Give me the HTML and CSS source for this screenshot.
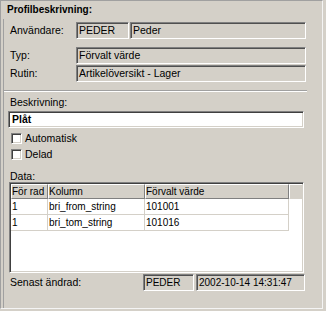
FILE: index.html
```html
<!DOCTYPE html>
<html>
<head>
<meta charset="utf-8">
<link rel="stylesheet" href="styles.css">
</head>
<body>
<div class="panel">
  <div class="title">Profilbeskrivning:</div>
  <div class="group">
    <div class="sec1">
      <div class="row r-anv"><span class="lbl">Användare:</span><span class="field f-user">PEDER</span><span class="field f-name">Peder</span></div>
      <div class="row r-typ"><span class="lbl">Typ:</span><span class="field f-wide">Förvalt värde</span></div>
      <div class="row r-rut"><span class="lbl">Rutin:</span><span class="field f-wide">Artikelöversikt - Lager</span></div>
    </div>
    <div class="sec2">
      <div class="lbl2 lbl-besk">Beskrivning:</div>
      <div class="edit">Plåt</div>
      <div class="chk chk1"><span class="box"></span><span>Automatisk</span></div>
      <div class="chk chk2"><span class="box"></span><span>Delad</span></div>
      <div class="lbl2 lbl-data">Data:</div>
      <div class="grid">
        <div class="ghead">
          <span class="hc c1">För rad</span><span class="hc c2">Kolumn</span><span class="hc c3">Förvalt värde</span><span class="hc c4"></span>
        </div>
        <div class="grow">
          <span class="gc c1">1</span><span class="gc c2">bri_from_string</span><span class="gc c3">101001</span>
        </div>
        <div class="grow">
          <span class="gc c1">1</span><span class="gc c2">bri_tom_string</span><span class="gc c3">101016</span>
        </div>
      </div>
      <div class="footer"><span class="lbl lbl-sen">Senast ändrad:</span><span class="field f-su">PEDER</span><span class="field f-date">2002-10-14 14:31:47</span></div>
    </div>
  </div>
</div>
</body>
</html>
```

FILE: styles.css
```css
html, body {
  margin: 0;
  padding: 0;
  background: #d4d0c8;
}
body {
  font-family: "Liberation Sans", Arial, sans-serif;
  font-size: 10px;
  color: #000;
}
.panel {
  width: 323px;
  height: 309px;
  box-sizing: border-box;
  border: 1px solid;
  border-color: #a0a0a0 #f4f4f4 #f4f4f4 #a0a0a0;
  display: flex;
  flex-direction: column;
}
.title {
  font-weight: bold;
  font-size: 10px;
  line-height: 13px;
  margin: 2px 0 0 6px;
  height: 13px;
}
.group {
  margin: 3px 0 0 2px;
  width: 304px;
  box-sizing: border-box;
  border-left: 1px solid #a0a0a0;
  flex: 1;
  display: flex;
  flex-direction: column;
}
.sec1 {
  padding: 3px 0 8px 6px;
  border-bottom: 1px solid #a0a0a0;
  box-shadow: 0 1px 0 #fff;
}
.row {
  display: flex;
  height: 17px;
  align-items: stretch;
}
.r-typ { margin-top: 8px; }
.r-rut { margin-top: 1px; }
.lbl {
  width: 66px;
  line-height: 17px;
  flex: none;
  font-size: 10.5px;
}
.field {
  box-sizing: border-box;
  height: 17px;
  border: 1px solid;
  border-color: #808080 #fff #fff #808080;
  box-shadow: inset 1px 1px 0 #505050;
  padding: 0 0 0 2px;
  line-height: 15px;
  white-space: nowrap;
  overflow: hidden;
  font-size: 10.5px;
}
.f-user { width: 53px; }
.f-name { width: 176px; margin-left: 1px; }
.f-wide { width: 230px; }
.sec2 {
  padding-left: 4px;
  display: flex;
  flex-direction: column;
}
.lbl2 {
  margin-left: 2px;
  line-height: 13px;
  height: 13px;
  font-size: 10.5px;
}
.lbl-besk { margin-top: 5px; }
.edit {
  margin-top: 2px;
  width: 296px;
  height: 17px;
  box-sizing: border-box;
  background: #fff;
  border: 1px solid;
  border-color: #808080 #fff #fff #808080;
  box-shadow: inset 1px 1px 0 #404040, inset -1px -1px 0 #d4d0c8;
  font-weight: bold;
  font-size: 10.5px;
  line-height: 15px;
  padding-left: 3px;
}
.chk {
  display: flex;
  align-items: center;
  height: 13px;
  line-height: 13px;
  font-size: 10.5px;
}
.chk1 { margin-top: 4px; }
.chk2 { margin-top: 3px; }
.box {
  width: 11px;
  height: 11px;
  box-sizing: border-box;
  margin: 0 3px 0 3px;
  background: #fff;
  border: 1px solid;
  border-color: #808080 #fff #fff #808080;
  box-shadow: inset 1px 1px 0 #404040, inset -1px -1px 0 #d4d0c8;
}
.lbl-data {
  margin-top: 9px;
  height: 12px;
  line-height: 12px;
}
.grid {
  margin-left: 1px;
  width: 295px;
  height: 91px;
  box-sizing: border-box;
  background: #fff;
  border: 1px solid;
  border-color: #808080 #fff #fff #808080;
  box-shadow: inset 1px 1px 0 #404040, inset -1px -1px 0 #d4d0c8;
  padding: 1px;
}
.ghead {
  display: flex;
  height: 15px;
  background: #d4d0c8;
}
.hc {
  box-sizing: border-box;
  height: 15px;
  border: 1px solid;
  border-color: #fff #808080 #808080 #fff;
  line-height: 13px;
  padding-left: 0;
  white-space: nowrap;
  overflow: hidden;
}
.c1 { width: 37px; }
.c2 { width: 97px; }
.c3 { width: 144px; }
.c4 { flex: 1; border-right: none; border-bottom-color: #d4d0c8; }
.grow {
  display: flex;
  height: 16px;
}
.gc {
  box-sizing: border-box;
  height: 16px;
  border-right: 1px solid #d4d0c8;
  border-bottom: 1px solid #d4d0c8;
  line-height: 15px;
  padding-left: 1px;
  white-space: nowrap;
}
.footer {
  display: flex;
  margin-top: 1px;
  height: 17px;
}
.lbl-sen {
  width: 133px;
  margin-left: 2px;
  line-height: 17px;
}
.f-su { width: 51px; font-size: 10px; }
.f-date { width: 109px; margin-left: 2px; font-size: 10px; }
```
